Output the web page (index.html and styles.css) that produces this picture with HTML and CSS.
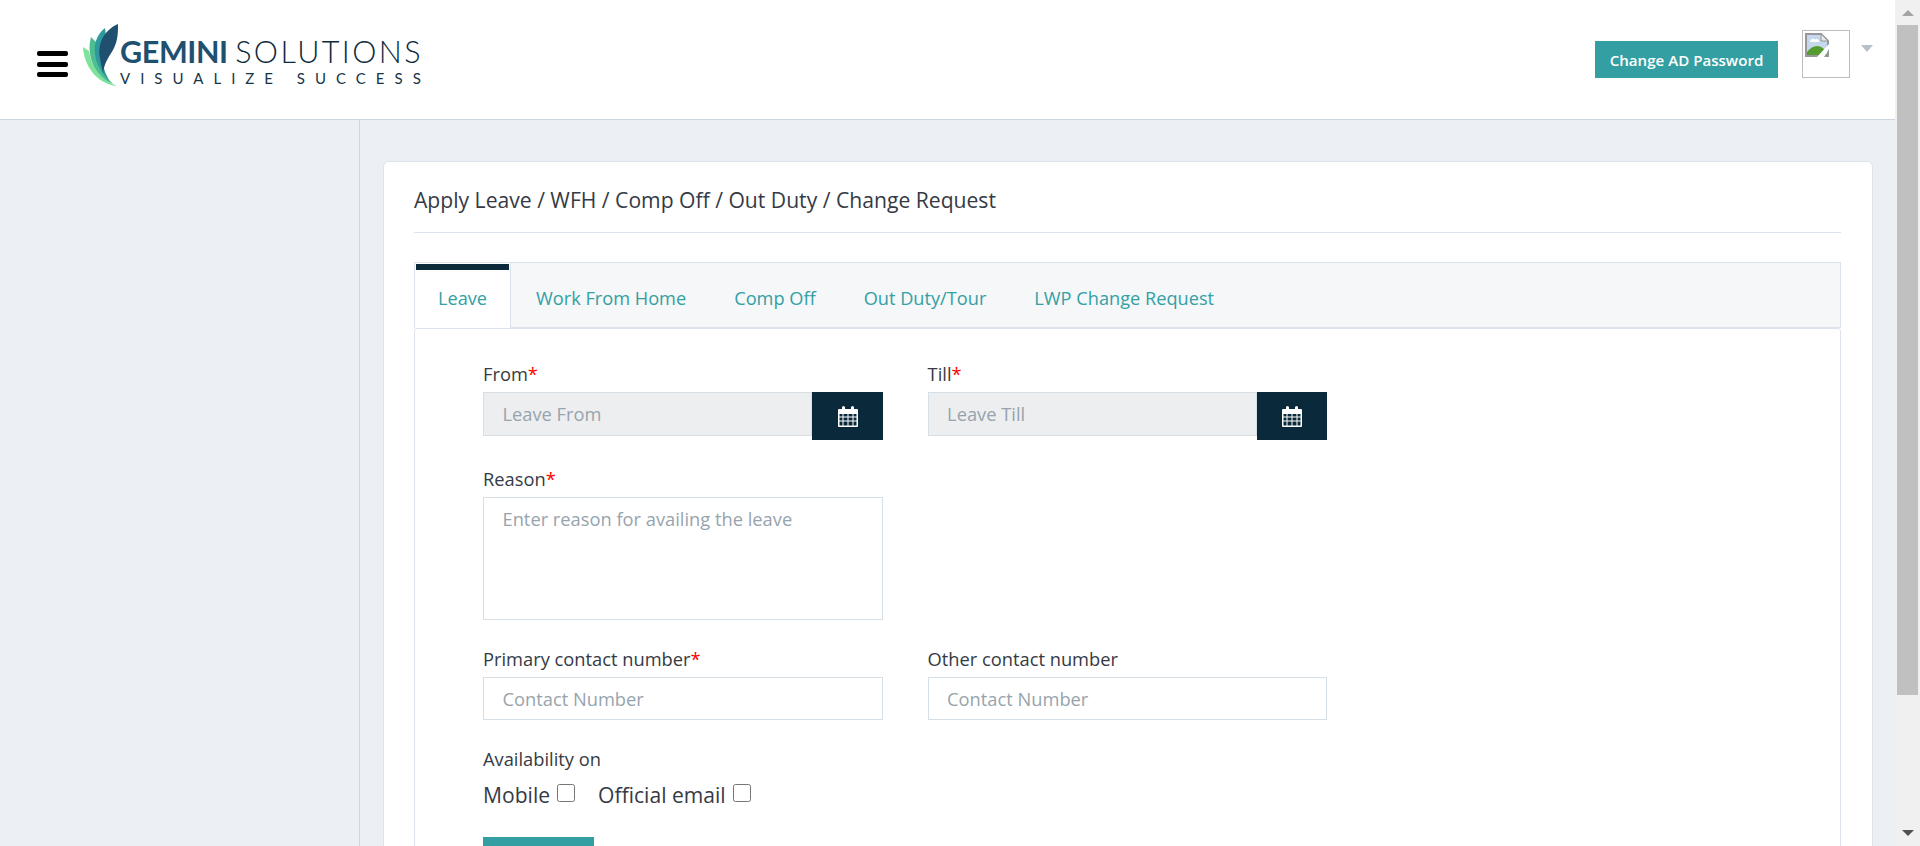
FILE: index.html
```html
<!DOCTYPE html>
<html lang="en">
<head>
<meta charset="utf-8">
<title>Apply Leave</title>
<link rel="stylesheet" href="styles.css">
</head>
<body>
<div class="window">
  <div class="viewport">
    <header class="topbar">
      <div class="menu"><span></span><span></span><span></span></div>
      <svg class="leaf" viewBox="80 22 40 66" width="40" height="66" aria-hidden="true">
        <path fill="#7fe29b" d="M83 47C84 66 97 84 117 86 103 80 92 70 89 51Z"/>
        <path fill="#4fbd92" d="M91 37C86 55 94 76 113 84 102 74 96 60 96 42Z"/>
        <path fill="#2f9a9e" d="M105 28C92 38 89 60 110 82 102 68 98 50 106 36Z"/>
        <path fill="#1f5070" d="M118 24C104 30 97 44 100 58 101 66 103 70 103 74 104 62 110 56 114 48 118 40 118 32 118 24Z"/>
      </svg>
      <div class="brand">
        <div class="brand-name"><b>GEMINI</b> <span>SOLUTIONS</span></div>
        <div class="brand-tag">VISUALIZE SUCCESS</div>
      </div>
      <div class="top-actions">
        <button class="ad-btn" type="button">Change AD Password</button>
        <div class="avatar">
          <svg viewBox="0 0 24 24" width="24" height="24" aria-hidden="true">
            <path fill="#c6d8ee" d="M1 1H16L23 8V23H1Z"/>
            <path fill="#fff" d="M5 9a3 3 0 0 1 5-2.500 2.500 2.500 0 0 1 4 2.500Z"/>
            <path fill="#549c30" d="M2 22V19C7 12 14 11 19 16L22 22Z"/>
            <path fill="none" stroke="#979797" stroke-width="2" d="M1 23V1H16L23 8V23Z"/>
            <path fill="#fff" d="M12 24 24 11V16L19 24Z"/>
            <path fill="#e8e8e8" stroke="#979797" d="M16 1V8H23Z"/>
          </svg>
        </div>
        <span class="caret"></span>
      </div>
    </header>
    <div class="body-row">
      <aside class="sidebar"></aside>
      <main class="main">
        <section class="card">
          <h1 class="title">Apply Leave / WFH / Comp Off / Out Duty / Change Request</h1>
          <nav class="tabs">
            <a class="tab active">Leave</a>
            <a class="tab">Work From Home</a>
            <a class="tab">Comp Off</a>
            <a class="tab">Out Duty/Tour</a>
            <a class="tab">LWP Change Request</a>
          </nav>
          <div class="panel">
            <div class="row">
              <div class="field">
                <label class="label">From<em>*</em></label>
                <div class="group">
                  <input class="input locked" placeholder="Leave From" readonly>
                  <button class="cal" type="button"><svg viewBox="0 0 20 21" width="20" height="21" aria-hidden="true"><path fill="#fff" fill-rule="evenodd" d="M1 3H4V1.500a1.500 1.500 0 0 1 3 0V3H13V1.500a1.500 1.500 0 0 1 3 0V3H19a1 1 0 0 1 1 1V20a1 1 0 0 1-1 1H1a1 1 0 0 1-1-1V4a1 1 0 0 1 1-1ZM1.500 8V10.500H4.500V8ZM5.500 8V10.500H9.500V8ZM10.500 8V10.500H14.500V8ZM15.500 8V10.500H18.500V8ZM1.500 11.500V14.500H4.500V11.500ZM5.500 11.500V14.500H9.500V11.500ZM10.500 11.500V14.500H14.500V11.500ZM15.500 11.500V14.500H18.500V11.500ZM1.500 15.500V19.500H4.500V15.500ZM5.500 15.500V19.500H9.500V15.500ZM10.500 15.500V19.500H14.500V15.500ZM15.500 15.500V19.500H18.500V15.500Z"/></svg></button>
                </div>
              </div>
              <div class="field">
                <label class="label">Till<em>*</em></label>
                <div class="group">
                  <input class="input locked" placeholder="Leave Till" readonly>
                  <button class="cal" type="button"><svg viewBox="0 0 20 21" width="20" height="21" aria-hidden="true"><path fill="#fff" fill-rule="evenodd" d="M1 3H4V1.500a1.500 1.500 0 0 1 3 0V3H13V1.500a1.500 1.500 0 0 1 3 0V3H19a1 1 0 0 1 1 1V20a1 1 0 0 1-1 1H1a1 1 0 0 1-1-1V4a1 1 0 0 1 1-1ZM1.500 8V10.500H4.500V8ZM5.500 8V10.500H9.500V8ZM10.500 8V10.500H14.500V8ZM15.500 8V10.500H18.500V8ZM1.500 11.500V14.500H4.500V11.500ZM5.500 11.500V14.500H9.500V11.500ZM10.500 11.500V14.500H14.500V11.500ZM15.500 11.500V14.500H18.500V11.500ZM1.500 15.500V19.500H4.500V15.500ZM5.500 15.500V19.500H9.500V15.500ZM10.500 15.500V19.500H14.500V15.500ZM15.500 15.500V19.500H18.500V15.500Z"/></svg></button>
                </div>
              </div>
            </div>
            <div class="row spaced">
              <div class="field">
                <label class="label">Reason<em>*</em></label>
                <textarea class="input area" placeholder="Enter reason for availing the leave"></textarea>
              </div>
            </div>
            <div class="row spaced">
              <div class="field">
                <label class="label">Primary contact number<em>*</em></label>
                <input class="input" placeholder="Contact Number">
              </div>
              <div class="field">
                <label class="label">Other contact number</label>
                <input class="input" placeholder="Contact Number">
              </div>
            </div>
            <div class="avail">
              <div class="label">Availability on</div>
              <div class="checks">
                <label class="check">Mobile <input type="checkbox"></label>
                <label class="check">Official email <input type="checkbox"></label>
              </div>
            </div>
            <button class="submit" type="button" aria-label="Submit"></button>
          </div>
        </section>
      </main>
    </div>
  </div>
  <div class="scrollbar">
    <span class="arrow up"></span>
    <span class="thumb"></span>
    <span class="arrow down"></span>
  </div>
</div>
</body>
</html>
```

FILE: styles.css
```css
* { box-sizing: border-box; }
html, body { margin: 0; height: 846px; overflow: hidden; }
body { font-family: "Open Sans", "Noto Sans", sans-serif; color: #353a45; background: #eceff4; }
.window { display: flex; height: 846px; overflow: hidden; }
.viewport { flex: 0 0 1895px; width: 1895px; display: flex; flex-direction: column; min-height: 0; }

.topbar { flex: 0 0 120px; height: 120px; display: flex; align-items: flex-start; background: #fff; border-bottom: 1px solid #cdd6e0; padding-left: 37px; }
.menu { width: 31px; margin-top: 51px; margin-right: 12px; display: flex; flex-direction: column; gap: 5.500px; }
.menu span { display: block; height: 5px; background: #000; border-radius: 2px; }
.leaf { margin-top: 22px; flex: none; }
.brand { margin-top: 35px; width: 304px; }
.brand-name { font-family: Lato, sans-serif; font-size: 30.500px; line-height: 32px; white-space: nowrap; letter-spacing: -.4px; }
.brand-name b { font-weight: 700; color: #1f5070; }
.brand-name span { font-weight: 300; color: #0b2a3c; letter-spacing: 2.400px; }
.brand-tag { font-family: Lato, sans-serif; font-size: 15px; line-height: 18px; letter-spacing: 10px; color: #163549; white-space: nowrap; margin-top: 2px; }
.top-actions { margin-left: auto; display: flex; align-items: flex-start; padding-right: 22px; }
.ad-btn { margin-top: 41px; width: 183px; height: 37px; border: 0; background: #339fa2; color: #fff; font: 600 15.100px "Open Sans", sans-serif; padding: 0; }
.avatar { margin-top: 30px; margin-left: 24px; width: 48px; height: 48px; border: 1px solid #bdbdbd; padding: 2px; }
.avatar svg { display: block; }
.caret { margin-top: 45px; margin-left: 11px; width: 0; height: 0; border-left: 6px solid transparent; border-right: 6px solid transparent; border-top: 7px solid #b8c1c9; }

.body-row { flex: 1; display: flex; min-height: 0; }
.sidebar { flex: 0 0 360px; background: #eceff4; border-right: 1px solid #cdd6e0; }
.main { flex: 1; padding: 41px 22px 0 23px; background: #eceff4; min-width: 0; }
.card { background: #fff; border: 1px solid #dde3ea; border-radius: 6px; padding: 22px 31px 0 30px; }
.title { margin: 0 0 29px; padding-bottom: 16px; border-bottom: 1px solid #dde3ea; font-size: 21.130px; font-weight: 400; line-height: 32px; color: #353a45; }

.tabs { display: flex; height: 66px; border: 1px solid #dde3ea; background: #f5f7f9; }
.tab { display: block; padding: 0 24px; line-height: 60px; margin-top: 5px; font-size: 18.200px; color: #33a0a3; white-space: nowrap; }
.tab:nth-child(2) { padding-left: 25px; }
.tab.active { position: relative; width: 97px; margin: -1px 0 -1px -1px; padding: 5px 0 0; text-align: center; line-height: 60px; background: #fff; border: 1px solid #dde3ea; border-bottom: 0; }
.tab.active::before { content: ""; position: absolute; left: 1px; right: 1px; top: 1px; height: 6px; background: #0a2a3c; }

.panel { background: #fff; border: 1px solid #dde3ea; border-radius: 3px 3px 0 0; padding: 33px 68px 40px; }
.row { display: flex; gap: 45px; }
.row.spaced { margin-top: 27px; }
.field { width: 399.600px; }
.label { display: block; font-size: 18.300px; line-height: 24px; color: #353a45; margin-bottom: 6px; }
.label em { color: #f00; font-style: normal; }
.group { display: flex; align-items: flex-start; }
.input { display: block; width: 100%; height: 43px; border: 1px solid #d6dfe6; background: #fff; padding: 0 18.500px 1px; font: 400 18.300px "Open Sans", sans-serif; color: #353a45; outline: 0; border-radius: 0; }
.input::placeholder { color: #97a4ad; opacity: 1; }
.input.locked { flex: 1; width: auto; min-width: 0; height: 44px; background: #edeef0; }
.cal { flex: 0 0 70.600px; height: 48px; border: 0; padding: 0 0 0 1px; background: #0a2a3c; display: flex; align-items: center; justify-content: center; }
.area { height: 123px; padding-top: 9px; resize: none; line-height: 24px; }

.avail { margin-top: 27px; }
.avail .label { margin: 0; }
.checks { display: flex; gap: 23px; margin-top: 12px; }
.check { display: flex; align-items: center; gap: 7px; font-size: 21.100px; line-height: 24px; color: #353a45; white-space: nowrap; }
.check input { width: 18px; height: 18px; margin: -4px 0 0; }
.submit { display: block; margin-top: 30px; width: 111px; height: 46px; border: 0; background: #339fa2; padding: 0; }

.scrollbar { flex: 1; background: #f0f0f0; display: flex; flex-direction: column; align-items: center; position: relative; }
.arrow { width: 0; height: 0; border-left: 6px solid transparent; border-right: 6px solid transparent; }
.arrow.up { margin-top: 10px; border-bottom: 6px solid #a3a3a3; }
.thumb { width: 21px; height: 670px; margin-top: 9px; background: #c0c0c0; }
.arrow.down { margin-top: auto; margin-bottom: 10px; border-top: 6px solid #505050; }
```
